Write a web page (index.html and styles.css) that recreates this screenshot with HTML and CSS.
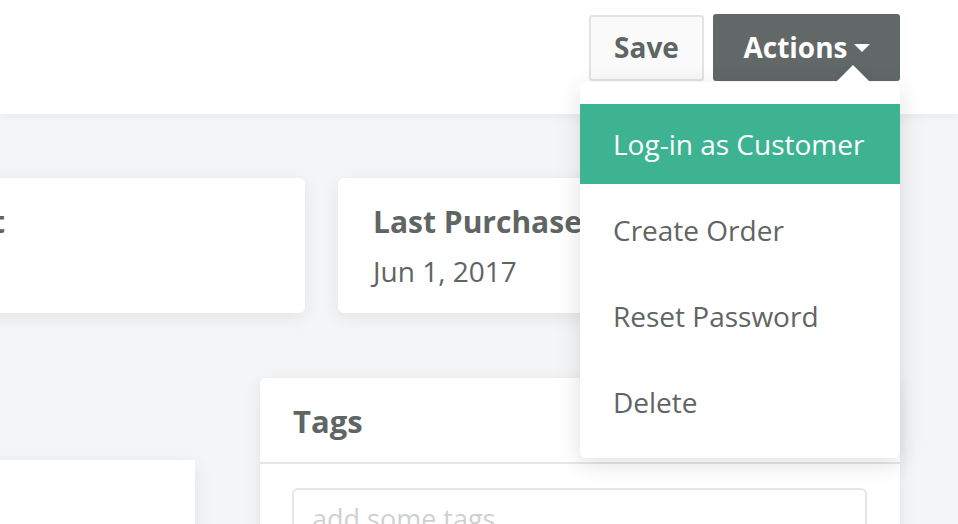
FILE: index.html
```html
<!DOCTYPE html>
<html lang="en">
<head>
  <meta charset="UTF-8" />
  <meta name="viewport" content="width=device-width, initial-scale=1.0"/>
  <title>Customer</title>
  <link rel="stylesheet" href="styles.css">
</head>
<body>
  <header class="topbar">
    <div class="toolbar">
      <button class="btn btn-save">Save</button>
      <div class="actions">
        <button class="btn btn-actions">Actions <span class="caret"></span></button>
        <div class="menu">
          <span class="menu-arrow"></span>
          <ul class="menu-list">
            <li class="menu-item active">Log-in as Customer</li>
            <li class="menu-item">Create Order</li>
            <li class="menu-item">Reset Password</li>
            <li class="menu-item">Delete</li>
          </ul>
        </div>
      </div>
    </div>
  </header>

  <main class="content">
    <div class="stats">
      <div class="card stat stat-wide">
        <h3 class="stat-title">Total Spent</h3>
        <div class="stat-value">$1,240.00</div>
      </div>
      <div class="card stat">
        <h3 class="stat-title">Last Purchase</h3>
        <div class="stat-value">Jun 1, 2017</div>
      </div>
    </div>

    <div class="lower">
      <div class="card side"></div>
      <div class="card tags">
        <div class="tags-head">Tags</div>
        <div class="tags-body">
          <input class="tags-input" type="text" placeholder="add some tags">
        </div>
      </div>
    </div>
  </main>
</body>
</html>
```

FILE: styles.css
```css
* {
  box-sizing: border-box;
  font-family: "Open Sans", Arial, sans-serif;
}

body {
  margin: 0;
  padding: 0;
  background: #f3f5f7;
  color: #5f6563;
  overflow: hidden;
}

.topbar {
  background: #fff;
  height: 114px;
  box-shadow: 0 2px 12px rgba(0,0,0,0.05);
  position: relative;
  z-index: 5;
}

.toolbar {
  display: flex;
  justify-content: flex-end;
  align-items: flex-start;
  gap: 9px;
  padding: 14px 58px 0 0;
}

.btn {
  height: 67px;
  font-size: 28px;
  font-weight: bold;
  border-radius: 3px;
  cursor: pointer;
}

.btn-save {
  margin-top: 1px;
  height: 66px;
  width: 115px;
  background: #fafafa;
  color: #5f6563;
  border: 2px solid #e3e3e3;
  padding: 0 0 2px 0;
}

.actions {
  position: relative;
}

.btn-actions {
  width: 187px;
  background: #626867;
  color: #fff;
  border: none;
  display: flex;
  align-items: center;
  justify-content: center;
  gap: 6px;
  padding: 0 0 2px 0;
}

.caret {
  width: 0;
  height: 0;
  border-left: 8px solid transparent;
  border-right: 8px solid transparent;
  border-top: 8px solid #fff;
  margin-top: 2px;
}

.menu {
  position: absolute;
  top: 68px;
  right: 0;
  width: 320px;
  background: #fff;
  border-radius: 6px;
  box-shadow: 0 6px 24px rgba(0,0,0,0.12);
  padding-top: 22px;
  padding-bottom: 16px;
}

.menu-arrow {
  position: absolute;
  top: -12px;
  right: 35px;
  width: 24px;
  height: 24px;
  background: #fff;
  transform: rotate(45deg);
  box-shadow: -2px -2px 6px rgba(0,0,0,0.04);
}

.menu-list {
  position: relative;
  list-style: none;
  margin: 0;
  padding: 0;
}

.menu-item {
  height: 86px;
  padding-top: 6px;
  line-height: 80px;
  padding-left: 33px;
  font-size: 28px;
  color: #5f6563;
  white-space: nowrap;
}

.menu-item.active {
  height: 80px;
  padding-top: 0;
  background: #3db391;
  color: #fff;
}

.content {
  padding-top: 64px;
}

.card {
  background: #fff;
  border-radius: 6px;
  box-shadow: 0 4px 18px rgba(0,0,0,0.08);
}

.stats {
  display: flex;
  gap: 33px;
  margin-left: -200px;
}

.stat {
  width: 365px;
  height: 135px;
  padding: 22px 35px;
}

.stat-wide {
  width: 505px;
}

.stat-title {
  margin: 0;
  font-size: 30px;
  font-weight: bold;
  line-height: 44px;
  white-space: nowrap;
}

.stat-value {
  margin-top: 3px;
  font-size: 28px;
  line-height: 48px;
}

.lower {
  display: flex;
  align-items: flex-start;
  gap: 65px;
  margin-top: 65px;
  margin-left: -60px;
}

.side {
  width: 255px;
  height: 200px;
  margin-top: 82px;
  border-radius: 0;
}

.tags {
  width: 640px;
  height: 220px;
}

.tags-head {
  height: 86px;
  padding: 0 33px;
  line-height: 86px;
  font-size: 31px;
  font-weight: bold;
  border-bottom: 2px solid #e6e6e6;
}

.tags-body {
  padding: 24px 32px;
}

.tags-input {
  width: 575px;
  height: 60px;
  border: 2px solid #e6e6e6;
  border-radius: 6px;
  padding: 0 18px;
  font-size: 27px;
  color: #5f6563;
}

.tags-input::placeholder {
  color: #cfd1d1;
}
```
